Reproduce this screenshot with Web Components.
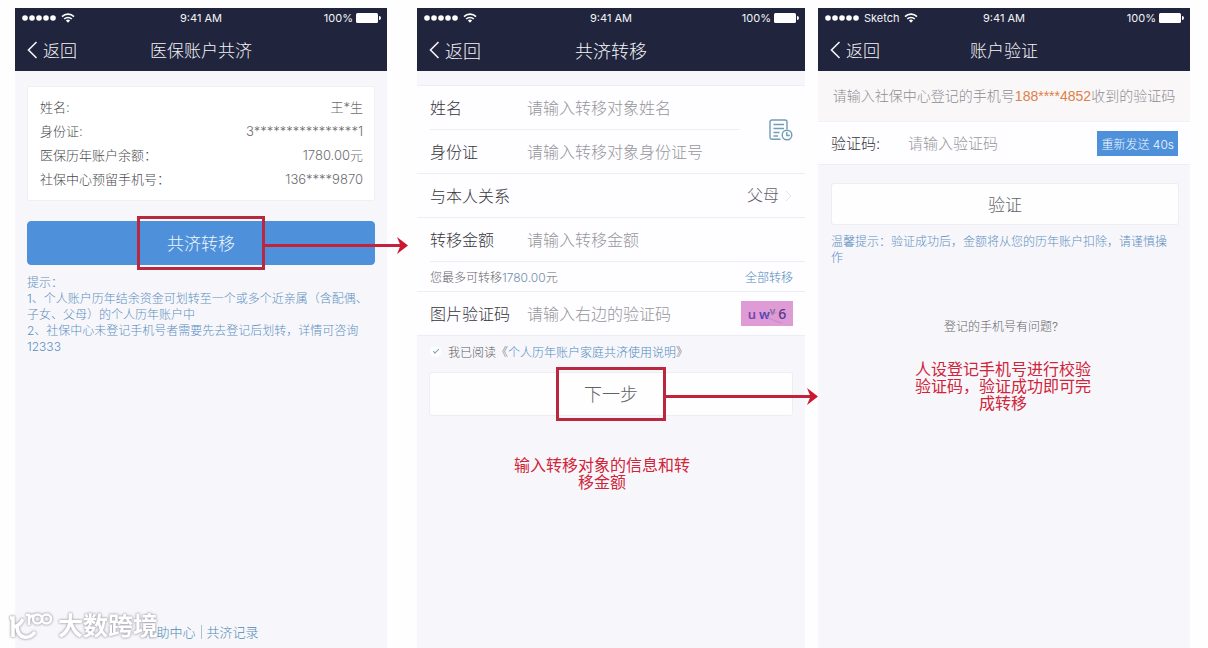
<!DOCTYPE html>
<html lang="zh-CN">
<head>
<meta charset="utf-8">
<meta name="viewport" content="width=device-width, initial-scale=1">
<title>医保账户共济</title>
<style>
  body {
    margin: 0;
    background: #fefefe;
    color: #4a4a4e;
    font-family: Inter, "Noto Sans CJK SC", sans-serif;
    font-weight: 300;
    font-size: 13px;
  }
</style>
</head>
<body>
<flow-page></flow-page>

<script>
const define = (name, html, setup) => {
  const template = document.createElement('template');
  template.innerHTML = html;
  customElements.define(name, class extends HTMLElement {
    constructor() {
      super();
      this.attachShadow({ mode: 'open' }).append(template.content.cloneNode(true));
    }
    connectedCallback() {
      if (setup) setup(this, this.shadowRoot);
    }
  });
};

/* Phone frame: status bar, navigation bar and a body for the slotted content */
define('phone-screen', `
  <style>
    :host { display: flex; flex-direction: column; min-width: 0; background: #f7f7fb; --bar: 17px; }
    header { background: #20243c; color: #f4f4f8; }
    .status { display: grid; grid-template-columns: 1fr auto 1fr; align-items: center; height: 20px; padding: 0 6px; font-size: 11px; font-weight: 400; }
    .left, .right { display: flex; align-items: center; }
    .left { gap: 4px; }
    .right { justify-content: flex-end; gap: 3px; }
    .nav { display: grid; grid-template-columns: 1fr auto 1fr; align-items: center; height: 43px; padding: 0 12px; font-size: var(--bar); }
    a { display: inline-flex; align-items: center; gap: 5px; color: inherit; text-decoration: none; justify-self: start; }
    h1 { margin: 0; font: inherit; }
    svg { display: block; }
    main { flex: 1; display: flex; flex-direction: column; min-width: 0; }
  </style>
  <header>
    <div class="status">
      <span class="left">
        <svg width="36" height="8" viewBox="0 0 36 8" fill="#fff"><circle cx="4" cy="4" r="2.800"/><circle cx="11" cy="4" r="2.800"/><circle cx="18" cy="4" r="2.800"/><circle cx="25" cy="4" r="2.800"/><circle cx="32" cy="4" r="2.800"/></svg>
        <slot name="carrier"></slot>
        <svg width="14" height="10" viewBox="0 0 14 10" fill="none" stroke="#fff" stroke-width="1.6"><path d="M1 3.6a8.6 8.6 0 0 1 12 0M3.2 6a5.4 5.4 0 0 1 7.6 0"/><path d="M4.9 7.6a3 3 0 0 1 4.2 0L7 9.8z" fill="#fff" stroke="none"/></svg>
      </span>
      <span>9:41 AM</span>
      <span class="right">100%
        <svg width="25" height="10" viewBox="0 0 25 10" fill="#fff"><rect width="22" height="10" rx="1.5"/><path d="M23 3v4a2 2 0 0 0 0-4z"/></svg>
      </span>
    </div>
    <div class="nav">
      <a href="#"><svg width="11" height="18" viewBox="0 0 11 18" fill="none" stroke="currentColor" stroke-width="1.6"><path d="M9.5 1 1.5 9l8 8"/></svg>返回</a>
      <h1><slot name="title"></slot></h1>
    </div>
  </header>
  <main><slot></slot></main>
`);

/* One label and value pair of the account card */
define('info-row', `
  <style>
    :host { display: flex; justify-content: space-between; line-height: 24px; }
    .value { color: #6c6c70; }
  </style>
  <span><slot name="label"></slot></span><span class="value"><slot></slot></span>
`);

define('action-button', `
  <style>
    :host { display: block; --size: 17px; --height: 44px; }
    button { display: block; box-sizing: border-box; width: 100%; height: var(--height); padding: 0 0 2px; font: inherit; font-size: var(--size);
      color: #626266; background: #fefeff; border: 1px solid #eeeef2; border-radius: 3px; }
    :host([primary]) button { color: #eef8ff; background: #4f90db; border-color: #4f90db; border-radius: 4px; }
    :host([compact]) button { width: auto; padding: 0 3px; border-radius: 0; }
  </style>
  <button type="button"><slot></slot></button>
`);

/* Labelled text box with room for a trailing control */
define('form-field', `
  <style>
    :host { display: flex; align-items: center; box-sizing: border-box; height: 44px; padding: 0 12px 0 13px;
      border-bottom: 1px solid #eeeef2; font-size: var(--field, 16px); background: #fefdff; }
    :host([inset]) { margin-left: 13px; padding-left: 0; }
    :host([bare]) { border-bottom: 0; }
    label { flex: none; width: var(--label, 97px); padding-bottom: 2px; color: #36363b; }
    input { flex: 1; min-width: 0; width: 0; padding: 0; border: 0; outline: 0; background: none; font: inherit; color: inherit; }
    input::placeholder { color: #97979b; opacity: 1; }
  </style>
  <label for="box"></label><input id="box" type="text"><slot></slot>
`, (host, root) => {
  root.querySelector('label').textContent = host.getAttribute('label');
  root.querySelector('input').placeholder = host.getAttribute('hint');
});

define('choice-field', `
  <style>
    :host { display: flex; align-items: center; justify-content: space-between; box-sizing: border-box; height: 44px; padding: 0 12px 0 13px;
      border-bottom: 1px solid #eeeef2; font-size: 16px; background: #fefdff; }
    label { padding-bottom: 2px; color: #36363b; }
    .pick { display: flex; align-items: center; gap: 5px; }
    select { appearance: none; padding: 0 0 2px; border: 0; background: none; font: inherit; color: #626266; }
  </style>
  <label for="box">与本人关系</label>
  <span class="pick"><select id="box"><option>父母</option></select>
  <svg width="8" height="12" viewBox="0 0 8 12" fill="none" stroke="#e2e2e8" stroke-width="1"><path d="m1 1 5 5-5 5"/></svg></span>
`);

/* Picture code beside the captcha box */
define('captcha-code', `
  <style>
    :host { display: flex; align-items: center; justify-content: center; gap: 3px; width: 52px; height: 25px; background: #df9bd6;
      position: relative; font: 600 13px "Noto Sans", sans-serif; color: #7d45ad; }
    .w { color: #5148b4; }
    .v { font-size: 10px; line-height: 12px; color: #806c8c; align-self: flex-start; }
    .six { font-weight: 500; font-size: 14px; color: #553a86; }
    svg { position: absolute; inset: 0; }
    .pair { display: flex; }
  </style>
  <span>u</span><span class="pair"><span class="w">w</span><span class="v">v</span></span><span class="six">6</span>
  <svg width="52" height="25" viewBox="0 0 52 25" fill="none" stroke="#c18ac8" stroke-width="1"><path d="M26 16q6 4 15 6M30 14l6-3"/></svg>
`);

/* Red frame on the middle of the slotted control, with an arrow to the next screen */
define('flow-callout', `
  <style>
    :host { display: block; position: relative; --frame: 128px; --reach: 33px; }
    .frame { position: absolute; top: -5px; bottom: -5px; left: calc(50% - var(--frame) / 2); width: var(--frame); box-sizing: border-box; border: 3px solid #b9283e; pointer-events: none; }
    .arrow { position: absolute; z-index: 2; top: 0; bottom: -5px; left: calc(50% + var(--frame) / 2); right: calc(0px - var(--reach)); display: flex; align-items: center; pointer-events: none; }
    .line { flex: 1; height: 3px; margin-right: -8px; background: #c4223a; }
    svg { flex: none; }
  </style>
  <slot></slot>
  <div class="frame"></div>
  <div class="arrow"><span class="line"></span><svg width="12" height="17" viewBox="0 0 12 17" fill="#cc1730"><path d="M1 0l11 8.5L1 17l3.5-8.5z"/></svg></div>
`);

define('flow-note', `
  <style>
    :host { display: block; width: 180px; font-size: 16px; font-weight: 400; line-height: 17px; text-align: center; color: #d02438; }
  </style>
  <slot></slot>
`);

define('tip-text', `
  <style>
    :host { display: block; font-size: 12px; line-height: 16px; color: #5d8fc0; }
  </style>
  <slot></slot>
`);

define('account-screen', `
  <style>
    :host { display: grid; min-width: 0; }
    .card { margin: 15px 12px 20px; padding: 8px 11px 9px 12px; background: #fff; border: 1px solid #f0f0f4; border-radius: 2px; }
    flow-callout { margin: 0 12px; }
    tip-text { margin: 10px 12px; }
    footer { display: flex; align-items: center; justify-content: center; gap: 5px; margin-top: auto; padding-bottom: 6px; line-height: 20px; }
    a { color: #4f8bb5; text-decoration: none; }
    i { width: 1px; height: 14px; background: #a9c3d6; }
  </style>
  <phone-screen>
    <span slot="title">医保账户共济</span>
    <div class="card">
      <info-row><span slot="label">姓名:</span>王*生</info-row>
      <info-row><span slot="label">身份证:</span>3****************1</info-row>
      <info-row><span slot="label">医保历年账户余额：</span>1780.00元</info-row>
      <info-row><span slot="label">社保中心预留手机号：</span>136****9870</info-row>
    </div>
    <flow-callout><action-button primary>共济转移</action-button></flow-callout>
    <tip-text>提示：<br>1、个人账户历年结余资金可划转至一个或多个近亲属（含配偶、子女、父母）的个人历年账户中<br>2、社保中心未登记手机号者需要先去登记后划转，详情可咨询12333</tip-text>
    <footer><a href="#">帮助中心</a><i></i><a href="#">共济记录</a></footer>
  </phone-screen>
`);

define('transfer-screen', `
  <style>
    :host { display: grid; min-width: 0; }
    phone-screen { --bar: 18px; }
    form { margin-top: 14px; border-top: 1px solid #eeeef2; background: #fefdff; }
    .person { display: grid; grid-template-columns: 1fr 65px; align-items: center; border-bottom: 1px solid #eeeef2; }
    .person > div { min-width: 0; }
    .person form-field[bare] { height: 43px; }
    .history { justify-self: end; margin-right: 12px; padding: 0; border: 0; background: none; }
    svg { display: block; }
    .limit { display: flex; align-items: center; justify-content: space-between; box-sizing: border-box; height: 30px; padding: 0 12px 0 13px; border-bottom: 1px solid #eeeef2; font-size: 12px; color: #66666a; }
    a, b { font-weight: inherit; color: #4f8bc0; text-decoration: none; }
    b { color: #7290ae; }
    .agree { display: flex; align-items: center; gap: 7px; height: 30px; margin: 0 13px 6px; font-size: 12px; color: #5c5c60; }
    .agree input { appearance: none; flex: none; width: 11px; height: 11px; margin: 0; border-radius: 50%; background: #fff; position: relative; }
    .agree input:checked::after { content: ""; position: absolute; left: 3px; top: 3px; width: 5px; height: 2px; border: solid #77a0b8; border-width: 0 0 1px 1px; rotate: -45deg; }
    flow-callout { margin: 0 12px; --frame: 110px; --reach: 25px; }
    action-button { --size: 18px; }
    flow-note { margin: 41px auto 0; padding-right: 18px; }
  </style>
  <phone-screen>
    <span slot="title">共济转移</span>
    <form>
      <div class="person">
        <div>
          <form-field inset label="姓名" hint="请输入转移对象姓名"></form-field>
          <form-field bare label="身份证" hint="请输入转移对象身份证号"></form-field>
        </div>
        <button class="history" type="button" aria-label="历史记录">
          <svg width="24" height="22" viewBox="0 0 24 22" fill="none" stroke="#6f9eb5" stroke-width="1.4"><path d="M11.5 20.3H3a2 2 0 0 1-2-2V3a2 2 0 0 1 2-2h13a2 2 0 0 1 2 2v7.5"/><path d="M4.500 5.500h10.500M4.500 9.500h10.500M4.500 13.500h6M4.500 17h4.500"/><circle cx="18" cy="16" r="4.800"/><path d="M17.800 13v3.500h3"/></svg>
        </button>
      </div>
      <choice-field></choice-field>
      <form-field inset label="转移金额" hint="请输入转移金额"></form-field>
      <div class="limit"><span>您最多可转移<b>1780.00</b>元</span><a href="#">全部转移</a></div>
      <form-field label="图片验证码" hint="请输入右边的验证码"><captcha-code></captcha-code></form-field>
    </form>
    <div class="agree"><input id="agree" type="checkbox" checked><label for="agree">我已阅读《<a href="#">个人历年账户家庭共济使用说明</a>》</label></div>
    <flow-callout><action-button>下一步</action-button></flow-callout>
    <flow-note>输入转移对象的信息和转移金额</flow-note>
  </phone-screen>
`);

define('verify-screen', `
  <style>
    :host { display: grid; min-width: 0; }
    .notice { margin: 0; line-height: 50px; font-family: "Liberation Sans", "Noto Sans CJK SC", sans-serif; font-size: 14px; text-align: center; white-space: nowrap; color: #8e8e92; background: #f9f7f8; border-bottom: 1px solid #f2f1f4; }
    .notice b { font-weight: inherit; color: #df8048; }
    form-field { --field: 15px; --label: 77px; height: 43px; }
    form-field action-button { --size: 12px; --height: 25px; }
    .submit { margin: 18px 11px 0 13px; --height: 42px; }
    tip-text { margin: 9px 18px 0 13px; }
    .help { margin: 53px 0 0; padding-right: 6px; font-size: 12px; line-height: 16px; text-align: center; }
    .help a { color: #66666a; text-decoration: none; }
    flow-note { margin: 26px auto 0; padding-right: 2px; }
  </style>
  <phone-screen>
    <span slot="carrier">Sketch</span>
    <span slot="title">账户验证</span>
    <p class="notice">请输入社保中心登记的手机号<b>188****4852</b>收到的验证码</p>
    <form-field label="验证码:" hint="请输入验证码"><action-button primary compact>重新发送 40s</action-button></form-field>
    <action-button class="submit">验证</action-button>
    <tip-text>温馨提示：验证成功后，金额将从您的历年账户扣除，请谨慎操作</tip-text>
    <p class="help"><a href="#">登记的手机号有问题?</a></p>
    <flow-note>人设登记手机号进行校验验证码，验证成功即可完成转移</flow-note>
  </phone-screen>
`);

/* Publisher's mark laid over the lower left corner */
define('brand-mark', `
  <style>
    :host { display: flex; align-items: center; gap: 4px; font-size: 25px; line-height: 36px; font-weight: 700; color: #fff;
      filter: drop-shadow(0 0 1px #a4a4ac) drop-shadow(0 0 1px #c4c4cc); }
  </style>
  <svg width="46" height="32" viewBox="0 0 46 32" fill="none" stroke="#fff"><path d="M2 8h3v19M5 17q7-1 10-8M9 17c1 12 12 13 18 5" stroke-width="3.600"/><path d="M18 5h3v10M21 9q1-4 6-3.500" stroke-width="2.600"/><circle cx="29.500" cy="9" r="4.500" stroke-width="2.600"/><circle cx="38.500" cy="9" r="4.500" stroke-width="2.600"/></svg>
  <span>大数跨境</span>
`);

define('flow-page', `
  <style>
    :host { display: grid; grid-template-columns: 392fr 401fr 382fr; box-sizing: border-box; min-height: 100vh; padding: 8px 18px 0 15px; position: relative; }
    account-screen { margin-right: 20px; }
    transfer-screen { margin: 0 3px 0 10px; }
    verify-screen { margin-left: 10px; }
    brand-mark { position: absolute; left: 8px; bottom: 4px; }
  </style>
  <account-screen></account-screen>
  <transfer-screen></transfer-screen>
  <verify-screen></verify-screen>
  <brand-mark></brand-mark>
`);
</script>
</body>
</html>
